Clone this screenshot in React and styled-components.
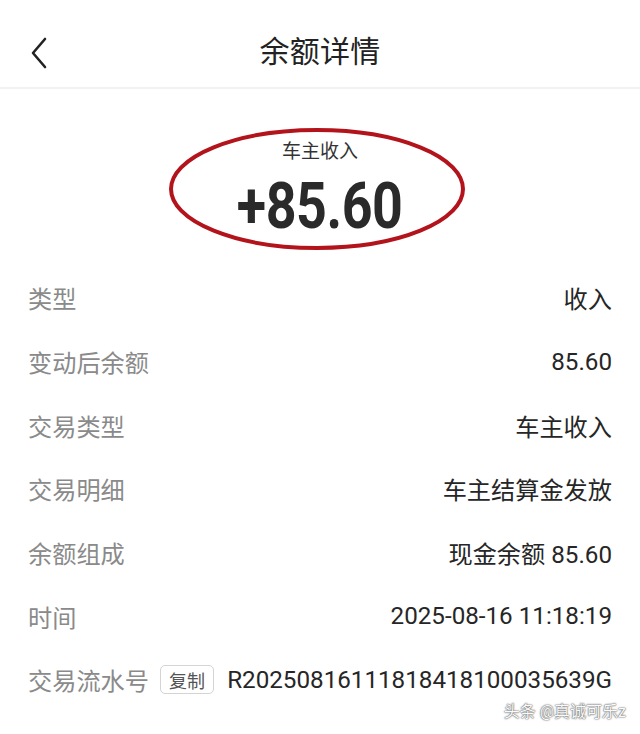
import styled, { createGlobalStyle } from "styled-components";

const GlobalStyle = createGlobalStyle`
  html, body {
    margin: 0;
    padding: 0;
    background: #ffffff;
  }
  body {
    font-family: Roboto, "Noto Sans CJK SC", sans-serif;
    -webkit-font-smoothing: antialiased;
  }
`;

const Page = styled.div`
  position: relative;
  width: 640px;
  height: 734px;
  overflow: hidden;
  background: #ffffff;
`;

const Header = styled.header`
  position: relative;
  height: 87px;
  display: flex;
  align-items: center;
  justify-content: center;
  border-bottom: 2px solid #f2f2f2;
`;

const BackButton = styled.button`
  position: absolute;
  left: 24px;
  top: 33px;
  width: 30px;
  height: 40px;
  padding: 0;
  border: none;
  background: none;
  display: flex;
  align-items: center;
  justify-content: center;
`;

const Title = styled.h1`
  margin: 0;
  margin-top: 10px;
  font-size: 30px;
  font-weight: 400;
  color: #222;
  letter-spacing: 0.3px;
`;

const Summary = styled.section`
  position: relative;
  height: 177px;
  display: flex;
  flex-direction: column;
  align-items: center;
`;

const Caption = styled.div`
  margin-top: 51px;
  font-size: 19px;
  line-height: 24px;
  color: #333;
`;

const Amount = styled.div`
  margin-top: 11px;
  font-size: 64px;
  line-height: 64px;
  font-weight: 700;
  color: #2a2a2a;
  transform: scaleX(0.84);
  letter-spacing: -0.5px;
`;

const Circle = styled.svg`
  position: absolute;
  left: 168px;
  top: 38px;
  pointer-events: none;
`;

const List = styled.div`
  display: flex;
  flex-direction: column;
`;

const Row = styled.div`
  height: 63.7px;
  padding: 0 28px;
  display: flex;
  align-items: center;
  justify-content: space-between;
  font-size: 24.2px;
`;

const Label = styled.div`
  display: flex;
  align-items: center;
  color: #8a8a8a;
`;

const Value = styled.div`
  color: #262626;
`;

const CopyTag = styled.span`
  margin-left: 11px;
  padding: 0 8px;
  height: 27px;
  display: inline-flex;
  align-items: center;
  border: 1px solid #d4d4d4;
  border-radius: 5px;
  font-size: 18px;
  color: #555;
`;

const Watermark = styled.div`
  position: absolute;
  right: 14px;
  bottom: 12px;
  font-size: 16px;
  color: #fafafa;
  text-shadow: 0 0 2px #555, 0 0 1px #444;
`;

const rows = [
  { label: "类型", value: "收入" },
  { label: "变动后余额", value: "85.60" },
  { label: "交易类型", value: "车主收入" },
  { label: "交易明细", value: "车主结算金发放" },
  { label: "余额组成", value: "现金余额 85.60" },
  { label: "时间", value: "2025-08-16 11:18:19" },
  { label: "交易流水号", value: "R20250816111818418100035639G", copy: true },
];

export default function App() {
  return (
    <Page>
      <GlobalStyle />
      <Header>
        <BackButton aria-label="返回">
          <svg width="20" height="32" viewBox="0 0 20 32">
            <path
              d="M16 2 L4 16 L16 30"
              fill="none"
              stroke="#222"
              strokeWidth="2.6"
              strokeLinecap="round"
              strokeLinejoin="round"
            />
          </svg>
        </BackButton>
        <Title>余额详情</Title>
      </Header>

      <Summary>
        <Caption>车主收入</Caption>
        <Amount>+85.60</Amount>
        <Circle width="300" height="126" viewBox="0 0 300 126">
          <ellipse
            cx="149"
            cy="62"
            rx="146"
            ry="59"
            fill="none"
            stroke="#b3141c"
            strokeWidth="4"
          />
        </Circle>
      </Summary>

      <List>
        {rows.map((row) => (
          <Row key={row.label}>
            <Label>
              {row.label}
              {row.copy && <CopyTag>复制</CopyTag>}
            </Label>
            <Value>{row.value}</Value>
          </Row>
        ))}
      </List>

      <Watermark>头条 @真诚可乐z</Watermark>
    </Page>
  );
}
